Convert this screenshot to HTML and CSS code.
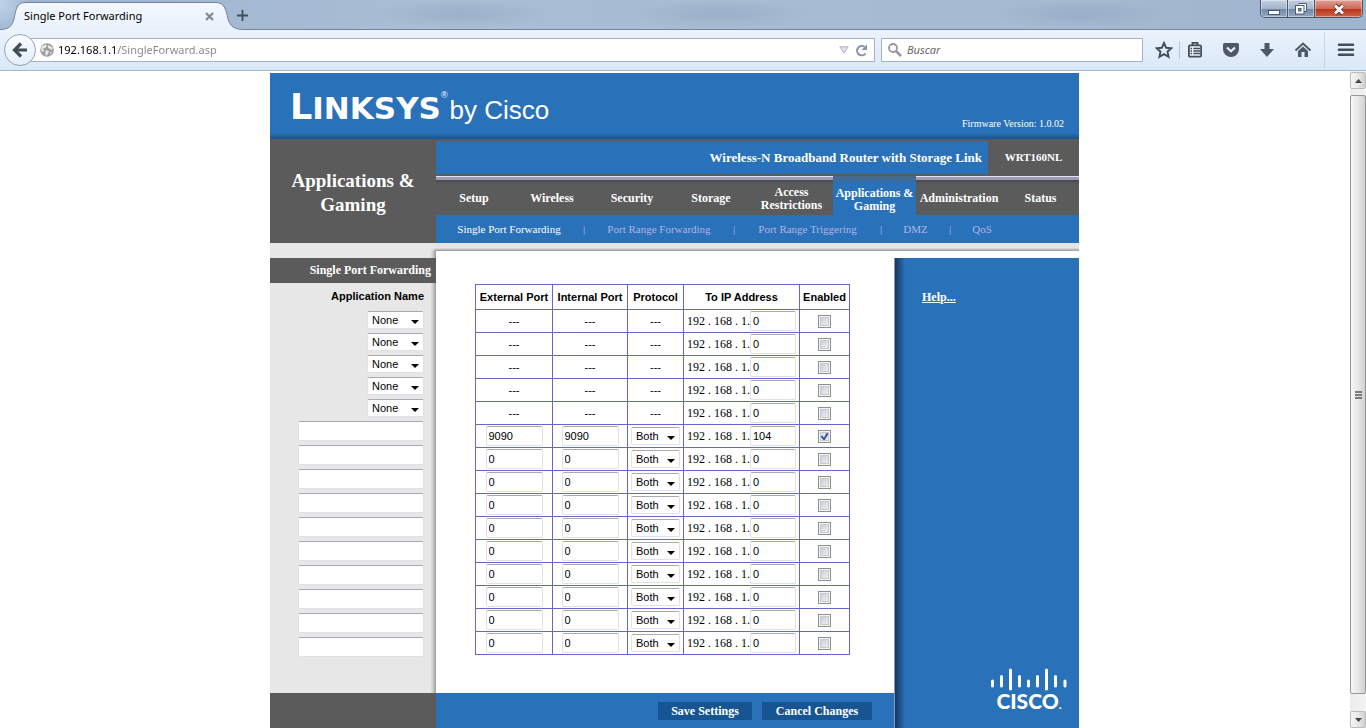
FILE: index.html
```html
<!DOCTYPE html>
<html lang="en">
<head>
<meta charset="utf-8">
<title>Single Port Forwarding</title>
<link rel="stylesheet" href="styles.css">
</head>
<body>
<div class="titlebar">
  <div class="tab">
    <svg class="tab-shape" width="244" height="30" viewBox="0 0 244 30" aria-hidden="true">
      <defs><linearGradient id="tabfill" x1="0" y1="0" x2="0" y2="1"><stop offset="0" stop-color="#f3f8fd"/><stop offset="1" stop-color="#e8f1fb"/></linearGradient></defs>
      <path d="M0 29.5C9 29.5 12 26 14 19C16 9 17 2.5 25 2.500H216C224 2.500 226 9 228 19C230 26 234 29.500 244 29.500V30H0Z" fill="url(#tabfill)"/>
      <path d="M0 29.500C9 29.500 12 26 14 19C16 9 17 2.500 25 2.500H216C224 2.500 226 9 228 19C230 26 234 29.500 244 29.500" fill="none" stroke="#71859d"/>
    </svg>
    <span class="tab-title">Single Port Forwarding</span>
    <button class="tab-close" aria-label="Close tab"><svg width="9" height="9" viewBox="0 0 9 9"><path d="M1 1L8 8M8 1L1 8" stroke="#7f8a96" stroke-width="2.200"/></svg></button>
  </div>
  <button class="tab-new" aria-label="New tab"><svg width="11" height="11" viewBox="0 0 11 11"><path d="M5.500 0V11M0 5.500H11" stroke="#414e5c" stroke-width="1.800"/></svg></button>
  <div class="window-buttons">
    <button class="win" aria-label="Minimize"><svg width="12" height="14" viewBox="0 0 12 14"><rect x=".5" y="8.500" width="11" height="4" fill="#fff" stroke="#4c5a70"/></svg></button>
    <button class="win" aria-label="Restore"><svg width="12" height="14" viewBox="0 0 12 14"><path d="M3.500 1.500H11.500V9.500H9" fill="#fff" stroke="#4c5a70"/><rect x=".5" y="3.500" width="8.500" height="8.500" fill="#fff" stroke="#4c5a70"/><rect x="3.500" y="6.500" width="2.500" height="2.500" fill="#8ea2bd" stroke="#4c5a70"/></svg></button>
    <button class="win win-close" aria-label="Close"><svg width="12" height="14" viewBox="0 0 12 14"><path d="M2 3L10 12M10 3L2 12" stroke="#5f3230" stroke-width="4.500"/><path d="M2 3.500L10 11.500M10 3.500L2 11.500" stroke="#fff" stroke-width="2.800"/></svg></button>
  </div>
</div>

<div class="toolbar">
  <div class="address">
    <button class="back" aria-label="Back"><svg width="16" height="16" viewBox="0 0 16 16"><path d="M9 1.500L2.500 8L9 14.500M3 8H15" fill="none" stroke="#414e5c" stroke-width="3.200"/></svg></button>
    <svg class="globe" width="14" height="14" viewBox="0 0 14 14" aria-hidden="true"><circle cx="7" cy="7" r="6.800" fill="#9c9c9c"/><path d="M2 3L6 1.500L7 3L5 5L3 5.500L4 8L2.500 9L1 7ZM8 2L12 4L12.500 7L10 6L8 5ZM6 7L9 8L8 11L6 13L5 10ZM10.500 8.500L12 9L10 12Z" fill="#e8e8e8"/></svg>
    <input class="url" type="text" aria-label="Address" value="192.168.1.1/SingleForward.asp">
    <svg class="drop" width="10" height="8" viewBox="0 0 10 8" aria-hidden="true"><path d="M.8 .8H9.200L5 7Z" fill="#dfe4ea" stroke="#a9b2bd"/></svg>
    <button class="reload" aria-label="Reload"><svg width="13" height="13" viewBox="0 0 13 13"><path d="M10.500 9.500A4.700 4.700 0 1 1 9.500 2.800" fill="none" stroke="#8292a4" stroke-width="2"/><path d="M12 .5V6H6.500Z" fill="#8292a4"/></svg></button>
  </div>
  <div class="search">
    <svg width="14" height="14" viewBox="0 0 14 14" aria-hidden="true"><circle cx="5" cy="5" r="4" fill="none" stroke="#999" stroke-width="1.800"/><path d="M8 8L13 13" stroke="#999" stroke-width="2.600"/></svg>
    <input type="text" aria-label="Buscar" placeholder="Buscar">
  </div>
  <div class="tools">
    <button aria-label="Bookmark"><svg width="18" height="18" viewBox="0 0 18 18"><path d="M9 2L11.200 6.800L16.300 7.300L12.500 10.700L13.600 15.900L9 13.200L4.400 15.900L5.500 10.700L1.700 7.300L6.800 6.800Z" fill="none" stroke="#414e5c" stroke-width="1.900"/></svg></button>
    <button class="divided" aria-label="Bookmarks list"><svg width="18" height="18" viewBox="0 0 18 18"><path d="M6.500 4V1.800H11.500V4" fill="none" stroke="#414e5c" stroke-width="1.800"/><rect x="2.900" y="4.400" width="12.200" height="11.200" rx="1" fill="#eef4fb" stroke="#414e5c" stroke-width="1.800"/><path d="M4.500 7.500H6M7.300 7.500H14M4.500 10H6M7.300 10H14M4.500 12.500H6M7.300 12.500H14" stroke="#414e5c" stroke-width="1.400"/></svg></button>
    <button aria-label="Pocket"><svg width="18" height="18" viewBox="0 0 18 18"><path d="M2.500 2H15.500Q17 2 17 3.500V8A8 8 0 0 1 1 8V3.500Q1 2 2.500 2Z" fill="#4d5966"/><path d="M5 6.500L9 10.300L13 6.500" fill="none" stroke="#eaf2fb" stroke-width="2.200"/></svg></button>
    <button aria-label="Downloads"><svg width="18" height="18" viewBox="0 0 18 18"><path d="M6.500 2H11.500V8H16L9 16L2 8H6.500Z" fill="#4d5966"/></svg></button>
    <button aria-label="Home"><svg width="18" height="18" viewBox="0 0 18 18"><path d="M1.500 9.500L9 2.500L16.500 9.500" fill="none" stroke="#4d5966" stroke-width="2"/><path d="M4 10L9 5.500L14 10V16H10.500V11H7.500V16H4Z" fill="#4d5966"/></svg></button>
    <button class="menu" aria-label="Menu"><svg width="18" height="18" viewBox="0 0 18 18"><path d="M2 3.800H16M2 8.800H16M2 13.800H16" stroke="#414e5c" stroke-width="2.600" stroke-linecap="round"/></svg></button>
  </div>
</div>

<div class="viewport">
  <div class="content">
    <div class="router">
      <header class="brand">
        <div class="logo"><span class="logo-cap">L</span><span class="logo-name">INKSYS</span><sup>®</sup><span class="logo-by">by Cisco</span></div>
        <div class="firmware">Firmware Version: 1.0.02</div>
      </header>

      <div class="nav">
        <h1>Applications &amp; Gaming</h1>
        <div class="nav-main">
          <div class="product"><div class="product-name">Wireless-N Broadband Router with Storage Link</div><div class="model">WRT160NL</div></div>
          <nav class="tabs">
            <a href="#">Setup</a><a href="#">Wireless</a><a href="#">Security</a><a href="#">Storage</a><a href="#">Access Restrictions</a><a href="#" class="active">Applications &amp; Gaming</a><a href="#">Administration</a><a href="#">Status</a>
          </nav>
          <nav class="subtabs">
            <a href="#" class="current">Single Port Forwarding</a><span>|</span><a href="#">Port Range Forwarding</a><span>|</span><a href="#">Port Range Triggering</a><span>|</span><a href="#">DMZ</a><span>|</span><a href="#">QoS</a>
          </nav>
        </div>
      </div>
      <div class="strip"></div>

      <form class="page">
        <aside class="side">
          <h2>Single Port Forwarding</h2>
          <div class="apps">
            <h3>Application Name</h3>
            <div class="app-selects">
              <select aria-label="Application 1"><option>None</option></select>
              <select aria-label="Application 2"><option>None</option></select>
              <select aria-label="Application 3"><option>None</option></select>
              <select aria-label="Application 4"><option>None</option></select>
              <select aria-label="Application 5"><option>None</option></select>
            </div>
            <div class="app-names">
              <input type="text" aria-label="Application name 6">
              <input type="text" aria-label="Application name 7">
              <input type="text" aria-label="Application name 8">
              <input type="text" aria-label="Application name 9">
              <input type="text" aria-label="Application name 10">
              <input type="text" aria-label="Application name 11">
              <input type="text" aria-label="Application name 12">
              <input type="text" aria-label="Application name 13">
              <input type="text" aria-label="Application name 14">
              <input type="text" aria-label="Application name 15">
            </div>
          </div>
        </aside>

        <main class="panel">
          <table>
            <colgroup><col class="c-port"><col class="c-int"><col class="c-proto"><col class="c-ip"><col class="c-on"></colgroup>
            <thead><tr><th>External Port</th><th>Internal Port</th><th>Protocol</th><th>To IP Address</th><th>Enabled</th></tr></thead>
            <tbody>
              <tr><td>---</td><td>---</td><td>---</td><td><label class="ip">192 . 168 . 1.<input type="text" value="0"></label></td><td><input type="checkbox" aria-label="Enabled 1"></td></tr>
              <tr><td>---</td><td>---</td><td>---</td><td><label class="ip">192 . 168 . 1.<input type="text" value="0"></label></td><td><input type="checkbox" aria-label="Enabled 2"></td></tr>
              <tr><td>---</td><td>---</td><td>---</td><td><label class="ip">192 . 168 . 1.<input type="text" value="0"></label></td><td><input type="checkbox" aria-label="Enabled 3"></td></tr>
              <tr><td>---</td><td>---</td><td>---</td><td><label class="ip">192 . 168 . 1.<input type="text" value="0"></label></td><td><input type="checkbox" aria-label="Enabled 4"></td></tr>
              <tr><td>---</td><td>---</td><td>---</td><td><label class="ip">192 . 168 . 1.<input type="text" value="0"></label></td><td><input type="checkbox" aria-label="Enabled 5"></td></tr>
              <tr><td><input class="port" type="text" aria-label="External port 6" value="9090"></td><td><input class="port" type="text" aria-label="Internal port 6" value="9090"></td><td><select aria-label="Protocol 6"><option>Both</option></select></td><td><label class="ip">192 . 168 . 1.<input type="text" value="104"></label></td><td><input type="checkbox" aria-label="Enabled 6" checked></td></tr>
              <tr><td><input class="port" type="text" aria-label="External port 7" value="0"></td><td><input class="port" type="text" aria-label="Internal port 7" value="0"></td><td><select aria-label="Protocol 7"><option>Both</option></select></td><td><label class="ip">192 . 168 . 1.<input type="text" value="0"></label></td><td><input type="checkbox" aria-label="Enabled 7"></td></tr>
              <tr><td><input class="port" type="text" aria-label="External port 8" value="0"></td><td><input class="port" type="text" aria-label="Internal port 8" value="0"></td><td><select aria-label="Protocol 8"><option>Both</option></select></td><td><label class="ip">192 . 168 . 1.<input type="text" value="0"></label></td><td><input type="checkbox" aria-label="Enabled 8"></td></tr>
              <tr><td><input class="port" type="text" aria-label="External port 9" value="0"></td><td><input class="port" type="text" aria-label="Internal port 9" value="0"></td><td><select aria-label="Protocol 9"><option>Both</option></select></td><td><label class="ip">192 . 168 . 1.<input type="text" value="0"></label></td><td><input type="checkbox" aria-label="Enabled 9"></td></tr>
              <tr><td><input class="port" type="text" aria-label="External port 10" value="0"></td><td><input class="port" type="text" aria-label="Internal port 10" value="0"></td><td><select aria-label="Protocol 10"><option>Both</option></select></td><td><label class="ip">192 . 168 . 1.<input type="text" value="0"></label></td><td><input type="checkbox" aria-label="Enabled 10"></td></tr>
              <tr><td><input class="port" type="text" aria-label="External port 11" value="0"></td><td><input class="port" type="text" aria-label="Internal port 11" value="0"></td><td><select aria-label="Protocol 11"><option>Both</option></select></td><td><label class="ip">192 . 168 . 1.<input type="text" value="0"></label></td><td><input type="checkbox" aria-label="Enabled 11"></td></tr>
              <tr><td><input class="port" type="text" aria-label="External port 12" value="0"></td><td><input class="port" type="text" aria-label="Internal port 12" value="0"></td><td><select aria-label="Protocol 12"><option>Both</option></select></td><td><label class="ip">192 . 168 . 1.<input type="text" value="0"></label></td><td><input type="checkbox" aria-label="Enabled 12"></td></tr>
              <tr><td><input class="port" type="text" aria-label="External port 13" value="0"></td><td><input class="port" type="text" aria-label="Internal port 13" value="0"></td><td><select aria-label="Protocol 13"><option>Both</option></select></td><td><label class="ip">192 . 168 . 1.<input type="text" value="0"></label></td><td><input type="checkbox" aria-label="Enabled 13"></td></tr>
              <tr><td><input class="port" type="text" aria-label="External port 14" value="0"></td><td><input class="port" type="text" aria-label="Internal port 14" value="0"></td><td><select aria-label="Protocol 14"><option>Both</option></select></td><td><label class="ip">192 . 168 . 1.<input type="text" value="0"></label></td><td><input type="checkbox" aria-label="Enabled 14"></td></tr>
              <tr><td><input class="port" type="text" aria-label="External port 15" value="0"></td><td><input class="port" type="text" aria-label="Internal port 15" value="0"></td><td><select aria-label="Protocol 15"><option>Both</option></select></td><td><label class="ip">192 . 168 . 1.<input type="text" value="0"></label></td><td><input type="checkbox" aria-label="Enabled 15"></td></tr>
            </tbody>
          </table>
        </main>

        <aside class="help">
          <a href="#">Help...</a>
          <div class="cisco">
            <svg width="76" height="23" viewBox="0 0 76 23" aria-hidden="true"><path d="M1.500 13V18M10.500 8.500V18M19.500 2V21M28.500 8.500V18M37.500 13V18M46.500 8.500V18M55.500 2V21M64.500 8.500V18M74 13V18" stroke="#fff" stroke-width="3" stroke-linecap="round"/></svg>
            <span class="cisco-name">CISCO<small>.</small></span>
          </div>
        </aside>

        <div class="foot-side"></div>
        <div class="foot"><button type="button" class="save">Save Settings</button><button type="button" class="cancel">Cancel Changes</button></div>
      </form>
    </div>
  </div>
  <div class="scrollbar" aria-hidden="true">
    <div class="arrow"><svg width="7" height="4" viewBox="0 0 7 4"><path d="M0 4L3.500 0L7 4Z" fill="#444"/></svg></div>
    <div class="thumb"><svg width="7" height="8" viewBox="0 0 7 8"><path d="M0 1H7M0 4H7M0 7H7" stroke="#555" stroke-width="1.600"/></svg></div>
    <div class="arrow"><svg width="7" height="4" viewBox="0 0 7 4"><path d="M0 0L3.500 4L7 0Z" fill="#444"/></svg></div>
  </div>
</div>
</body>
</html>
```

FILE: styles.css
```css
:root {
  --blue: #2971b9;
  --grey: #5b5b5b;
  --light: #e7e7e7;
  --serif: "Liberation Serif", "Times New Roman", serif;
  --sans: "Liberation Sans", Arial, sans-serif;
  --ui: "Noto Sans", "Open Sans", sans-serif;
}

* { box-sizing: border-box; }

body {
  margin: 0;
  height: 100vh;
  display: flex;
  flex-direction: column;
  overflow: hidden;
  background: #fff;
  font: 12px/16px var(--serif);
}

button { border: 0; padding: 0; background: none; font: inherit; }
button svg, .cisco svg { display: block; }
h1, h2, h3 { margin: 0; }
a { color: inherit; text-decoration: none; }

/* Window title bar */
.titlebar {
  flex: none;
  display: flex;
  align-items: flex-start;
  height: 30px;
  border-bottom: 1px solid #71859d;
  background:
    radial-gradient(ellipse 30px 30px at 0 4px, #c0d3ea, transparent),
    radial-gradient(ellipse 90px 14px at 460px 14px, rgba(135, 158, 186, .4), transparent),
    radial-gradient(ellipse 90px 14px at 720px 14px, rgba(135, 158, 186, .4), transparent),
    radial-gradient(ellipse 90px 14px at 1080px 14px, rgba(135, 158, 186, .4), transparent),
    linear-gradient(90deg, #9db4d0, #a9bdd4 30%, #a6bad1 75%, #9fb4cd 100%);
}

.tab {
  position: relative;
  display: flex;
  align-items: center;
  justify-content: space-between;
  width: 240px;
  height: 30px;
  padding: 2px 26px 0 24px;
  font: 11px/16px var(--ui);
}
.tab-shape { position: absolute; left: 0; top: 0; }
.tab-title, .tab-close { position: relative; }
.tab-new { margin: 10px 0 0 -3px; }

.window-buttons {
  display: flex;
  margin: 0 3px 0 auto;
  border: 1px solid #46566c;
  border-top: 0;
  border-radius: 0 0 5px 5px;
  overflow: hidden;
}
.win {
  display: grid;
  place-items: center;
  width: 27px;
  height: 17px;
  border-right: 1px solid #46566c;
  background: linear-gradient(#c3d0e0, #a3b4ca 50%, #6f87a8 51%, #93a9c6);
  box-shadow: inset 0 0 0 1px rgba(255, 255, 255, .4);
}
.win-close {
  width: 47px;
  border-right: 0;
  background: linear-gradient(#dfa195, #cf6a58 50%, #b8301a 51%, #cf6243);
}

/* Navigation toolbar */
.toolbar {
  flex: none;
  display: flex;
  align-items: center;
  height: 41px;
  padding: 0 9px 0 4px;
  border-bottom: 1px solid #a5b6cd;
  background: linear-gradient(#ebf3fc, #dae8f8);
  font: 11px/16px var(--ui);
}
.toolbar input {
  flex: 1;
  min-width: 0;
  border: 0;
  padding: 0;
  outline: 0;
  background: none;
  font: inherit;
}
.address, .search {
  display: flex;
  align-items: center;
  height: 24px;
  border: 1px solid #a2b4ca;
  background: #fff;
}
.address { flex: 1; margin-left: 12px; padding-right: 6px; }
.back {
  flex: none;
  display: grid;
  place-items: center;
  width: 32px;
  height: 32px;
  margin-left: -13px;
  border: 1px solid #93a6be;
  border-radius: 50%;
  background: linear-gradient(#fafcfe, #e4eef9);
}
.globe { margin: 0 4px 0 4px; }
.toolbar .url {
  color: transparent;
  background: linear-gradient(90deg, #000 58px, #858585 58px);
  -webkit-background-clip: text;
  background-clip: text;
}
.drop { margin-right: 6px; }
.search { width: 262px; margin-left: 6px; padding: 0 6px; gap: 5px; }
.search input { font-style: italic; }
.search input::placeholder { color: #666; opacity: 1; }

.tools { display: flex; align-items: center; padding-left: 11px; }
.tools button { display: grid; place-items: center; width: 36px; height: 18px; }
.tools button:first-child { width: 20px; margin-right: 5px; }
.tools .divided { width: 32px; margin-right: 2px; padding-right: 1px; border-left: 1px solid #b9c8da; }
.tools .menu { width: 33px; height: 36px; margin-left: 3px; padding-left: 9px; border-left: 1px solid #c7d6e7; }

/* Page area */
.viewport { flex: 1; min-height: 0; display: flex; }
.content { flex: 1; min-width: 0; overflow: hidden; padding-top: 2px; }
.router { max-width: 809px; margin: 0 auto; color: #fff; }

.brand {
  display: flex;
  justify-content: space-between;
  align-items: flex-end;
  height: 66px;
  padding: 0 15px 7px 20px;
  background: linear-gradient(transparent 60px, #1c5288), var(--blue);
}
.logo { display: flex; align-items: baseline; padding-bottom: 2px; line-height: 40px; font-family: "DejaVu Sans", sans-serif; font-weight: bold; }
.logo-cap { font-size: 35px; }
.logo-name { font-size: 31px; }
.logo sup { align-self: flex-start; font: 9px/16px var(--sans); }
.logo-by { padding-left: 2px; font-family: var(--sans); font-weight: normal; font-size: 26px; }
.firmware { font-size: 10px; line-height: 16px; }

.nav { display: grid; grid-template-columns: 166px 1fr; background: var(--grey); }
.nav h1 { align-self: center; padding: 4px 16px 0; text-align: center; font-size: 19px; line-height: 24px; }
.product {
  display: grid;
  grid-template-columns: 1fr 91px;
  align-items: center;
  padding: 2px 0 0;
  font-size: 13px;
  font-weight: bold;
  line-height: 33px;
}
.product-name { padding-right: 6px; text-align: right; background: var(--blue); }
.model { text-align: center; font-size: 11px; }
.product::after {
  content: "";
  grid-column: 1 / -1;
  height: 4px;
  margin-top: 2px;
  background: linear-gradient(#e4e4ea 1px, #9c9cb6 1px);
}
.tabs {
  display: grid;
  grid-template-columns: 76fr 80fr 80fr 78fr 83fr 83fr 86fr 77fr;
  height: 35px;
  padding-top: 2px;
  background: linear-gradient(#484848, transparent 4px);
  font-size: 12px;
  font-weight: bold;
  line-height: 13px;
}
.tabs a { display: grid; place-items: center; text-align: center; }
.tabs .active { margin-top: -6px; padding-top: 8px; background: linear-gradient(#4c6784, var(--blue) 8px); }
.subtabs {
  display: grid;
  grid-template-columns: 146fr 4fr 146fr 4fr 143fr 4fr 65fr 4fr 60fr 67fr;
  height: 28px;
  align-items: center;
  text-align: center;
  background: var(--blue);
  color: #b3b3e6;
  font-size: 11px;
}
.subtabs .current { color: #fff; }

.strip { height: 8px; background: linear-gradient(90deg, var(--light) 162px, transparent 166px), linear-gradient(#e4e4e4 5px, #c8c8c8 6px, #999); }

.page { display: grid; grid-template-columns: 166px 1fr 185px; background: #fff; }
.side { padding-top: 7px; background: linear-gradient(270deg, #999, #ccc 3px, transparent 6px), var(--light); }
.side h2 {
  padding-right: 5px;
  background: var(--grey);
  text-align: right;
  font-size: 12px;
  line-height: 25px;
}
.apps { display: flex; flex-direction: column; padding: 5px 12px 36px 28px; }
.apps h3 { text-align: right; color: #000; font: bold 11px/16px var(--sans); }
.app-selects { display: flex; flex-direction: column; align-items: flex-end; gap: 4px; padding: 7px 0 4px; }
.app-names { display: flex; flex-direction: column; gap: 4px; }

.page select, .page input {
  display: block;
  margin: 0;
  border: 1px solid #dfe1e8;
  border-top-color: #a9a9b1;
  border-radius: 2px;
  background: #fff;
  color: #000;
  font: 11px/16px var(--sans);
}
.page select {
  appearance: none;
  height: 18px;
  padding: 0 4px;
  background: #fff url("data:image/svg+xml,%3Csvg xmlns='http://www.w3.org/2000/svg' width='8' height='4'%3E%3Cpath d='M0 0H8L4 4Z'/%3E%3C/svg%3E") no-repeat right 4px top 8px;
}
.app-selects select { width: 57px; }
.page input { height: 20px; padding: 0 2px; }

.panel { padding: 33px 44px 38px 39px; }
table { width: 100%; table-layout: fixed; border-collapse: collapse; color: #000; font: 11px/16px var(--sans); }
th, td { height: 23px; padding: 0; border: 1px solid #6666cc; text-align: center; white-space: nowrap; }
th { height: 25px; }
.c-port { width: 77px; }
.c-int { width: 75px; }
.c-proto { width: 56px; }
.c-ip { width: 116px; }
.c-on { width: 50px; }
.page .port { width: 57px; margin: 0 auto; }
.page td select { width: 49px; margin: 0 auto; }
.ip { display: flex; justify-content: space-between; align-items: center; padding: 0 3px; font: 12px/16px var(--serif); }
.page .ip input { width: 46px; }
.page input[type="checkbox"] {
  appearance: none;
  width: 13px;
  height: 13px;
  margin: 0 auto;
  padding: 0;
  border: 1px solid #8e8f8f;
  border-radius: 0;
  background: linear-gradient(135deg, #c2c7cf, #f4f5f6);
  box-shadow: inset 0 0 0 1px #f4f4f4, inset 0 0 0 2px #c6cad1;
}
.page input[type="checkbox"]:checked {
  background: url("data:image/svg+xml,%3Csvg xmlns='http://www.w3.org/2000/svg' width='11' height='11'%3E%3Cpath d='M2.500 5L5 8.500L9 1.500' fill='none' stroke='%233b55a0' stroke-width='2'/%3E%3C/svg%3E"), linear-gradient(135deg, #d3d8e2, #f4f5f6);
}

.help {
  grid-column: 3;
  grid-row: 1 / 3;
  display: flex;
  flex-direction: column;
  justify-content: space-between;
  align-items: flex-start;
  margin-top: 7px;
  padding: 31px 12px 13px 27px;
  border-left: 1px solid #8c98a8;
  background: linear-gradient(90deg, #17355f, var(--blue) 10px);
  font-weight: bold;
}
.help a { text-decoration: underline; }
.cisco { align-self: flex-end; display: flex; flex-direction: column; align-items: center; }
.cisco-name { font: 900 21px/20px Lato, sans-serif; }
.cisco-name small { font-size: 12px; }

.foot-side { background: var(--grey); }
.foot {
  display: flex;
  justify-content: flex-end;
  align-items: center;
  gap: 10px;
  height: 35px;
  padding-right: 22px;
  background: var(--blue);
}
.foot button { height: 18px; background: #175592; color: #fff; font: bold 12px/18px var(--serif); }
.save { width: 94px; }
.cancel { width: 110px; }

/* Scroll bar */
.scrollbar {
  flex: none;
  display: flex;
  flex-direction: column;
  width: 17px;
  padding: 1px 0 0 1px;
  background: linear-gradient(90deg, #fff 1px, #ececec 1px, #f3f3f3);
}
.arrow, .thumb {
  display: grid;
  place-items: center;
  border: 1px solid #979797;
  border-radius: 2px;
  background: linear-gradient(90deg, #f6f6f6, #e8e8e8 50%, #d0d0d3);
}
.arrow { height: 17px; border-color: #bcbcbc; }
.thumb { flex: 1; margin: 6px 0 17px; }
```
